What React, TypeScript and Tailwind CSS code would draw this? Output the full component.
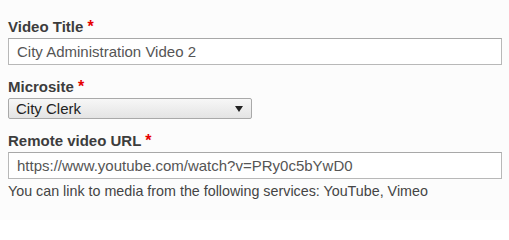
import React from 'react';

const font = { fontFamily: '"Liberation Sans", Arial, sans-serif' };

function Label({ text }: { text: string }) {
  return (
    <label className="block h-[18px] text-[15px] font-bold leading-[18px] text-[#3d3d3d]">
      {text} <span className="text-[16px] text-[#e60000]">*</span>
    </label>
  );
}

export default function App() {
  return (
    <div
      className="h-[220px] w-[509px] bg-[#fcfcfc] px-2 pt-[18px]"
      style={font}
    >
      <div>
        <Label text="Video Title" />
        <input
          readOnly
          value="City Administration Video 2"
          className="mt-[2px] block h-[27px] w-[494px] border border-[#b8b8b8] border-t-[#a8a8a8] bg-white px-2 text-[15px] text-[#555] outline-none"
          style={font}
        />
      </div>

      <div className="mt-[13px]">
        <Label text="Microsite" />
        <div className="mt-[2px] flex h-[21px] w-[244px] items-center justify-between rounded-[2px] border border-[#a9a9a9] bg-gradient-to-b from-[#f7f7f7] to-[#e4e4e4] pl-[7px] pr-[8px] text-[15px] leading-[19px] text-[#222]">
          <span>City Clerk</span>
          <svg width="8" height="6" viewBox="0 0 8 6" className="mt-[1px]">
            <path d="M0 0h8L4 6z" fill="#222" />
          </svg>
        </div>
      </div>

      <div className="mt-[13px]">
        <Label text="Remote video URL" />
        <input
          readOnly
          value="https://www.youtube.com/watch?v=PRy0c5bYwD0"
          className="mt-[2px] block h-[27px] w-[494px] border border-[#b8b8b8] border-t-[#a8a8a8] bg-white px-2 text-[15px] text-[#555] outline-none"
          style={font}
        />
        <p className="mt-[4px] text-[14.3px] leading-[16px] text-[#444]">
          You can link to media from the following services: YouTube, Vimeo
        </p>
      </div>
    </div>
  );
}
